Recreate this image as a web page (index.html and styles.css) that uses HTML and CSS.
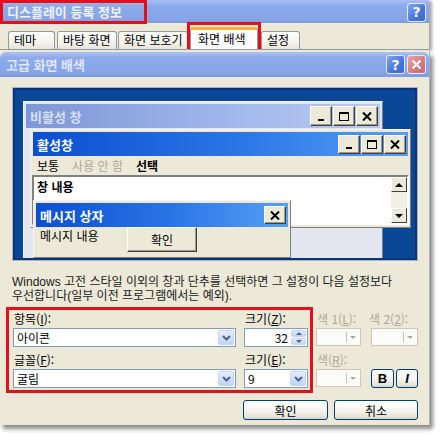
FILE: index.html
```html
<!DOCTYPE html>
<html lang="ko">
<head>
  <meta charset="utf-8">
  <link rel="stylesheet" href="styles.css">
</head>
<body>
<div class="screen">

  <div class="back">
    <div class="back-title">
      <span class="title-mark">디스플레이 등록 정보</span>
      <span class="xp-btn xp-help back-help">?</span>
    </div>
    <div class="tabs">
      <span class="tab t1">테마</span>
      <span class="tab t2">바탕 화면</span>
      <span class="tab t3">화면 보호기</span>
      <span class="tab-mark"><span class="tab tab-on">화면 배색</span></span>
      <span class="tab t5">설정</span>
    </div>
  </div>

  <div class="front">
    <div class="front-title">
      <span class="front-name">고급 화면 배색</span>
      <span class="xp-btn xp-help">?</span>
      <span class="xp-btn xp-close">
        <svg width="11" height="11" viewBox="0 0 11 11"><path d="M1.5 1.5L9.5 9.5M9.5 1.5L1.5 9.5" stroke="#fff" stroke-width="2"/></svg>
      </span>
    </div>

    <div class="preview">
      <div class="win win-inactive">
        <div class="win-title">
          <span class="win-name">비활성 창</span>
          <span class="ctl"><svg width="10" height="9"><rect x="2" y="7" width="6" height="2"/></svg></span>
          <span class="ctl"><svg width="10" height="9"><rect x="0.5" y="0.5" width="9" height="8" fill="none" stroke="#000"/><rect width="10" height="2"/></svg></span>
          <span class="ctl"><svg width="10" height="9"><path d="M1 0.5L9 8.5M9 0.5L1 8.5" stroke="#000" stroke-width="2"/></svg></span>
        </div>
      </div>

      <div class="win win-active">
        <div class="win-title">
          <span class="win-name">활성창</span>
          <span class="ctl"><svg width="10" height="9"><rect x="2" y="7" width="6" height="2"/></svg></span>
          <span class="ctl"><svg width="10" height="9"><rect x="0.5" y="0.5" width="9" height="8" fill="none" stroke="#000"/><rect width="10" height="2"/></svg></span>
          <span class="ctl"><svg width="10" height="9"><path d="M1 0.5L9 8.5M9 0.5L1 8.5" stroke="#000" stroke-width="2"/></svg></span>
        </div>
        <div class="menu">
          <span>보통</span>
          <span class="menu-off">사용 안 함</span>
          <span class="menu-sel">선택</span>
        </div>
        <div class="content">
          <span class="content-text">창 내용</span>
          <div class="scroll">
            <span class="sbtn"><span class="tri-up"></span></span>
            <span class="strack"></span>
            <span class="sbtn"><span class="tri-down"></span></span>
          </div>
        </div>
      </div>

      <div class="win win-msg">
        <div class="win-title">
          <span class="win-name">메시지 상자</span>
          <span class="ctl"><svg width="10" height="9"><path d="M1 0.5L9 8.5M9 0.5L1 8.5" stroke="#000" stroke-width="2"/></svg></span>
        </div>
        <div class="msg-body">
          <span class="msg-text">메시지 내용</span>
          <span class="classic-btn">확인</span>
        </div>
      </div>
    </div>

    <p class="note">Windows 고전 스타일 이외의 창과 단추를 선택하면 그 설정이 다음 설정보다<br>우선합니다(일부 이전 프로그램에서는 예외).</p>

    <div class="fields">
      <div class="redbox">
        <div class="col col-wide">
          <span class="label">항목(<u>I</u>):</span>
          <div class="combo"><span class="combo-text">아이콘</span><span class="drop"><svg width="9" height="6"><path d="M1 1L4.5 4.5L8 1" fill="none" stroke="#4d6185" stroke-width="2"/></svg></span></div>
          <span class="label label-2">글꼴(<u>F</u>):</span>
          <div class="combo"><span class="combo-text">굴림</span><span class="drop"><svg width="9" height="6"><path d="M1 1L4.5 4.5L8 1" fill="none" stroke="#4d6185" stroke-width="2"/></svg></span></div>
        </div>
        <div class="col col-size">
          <span class="label">크기(<u>Z</u>):</span>
          <div class="combo spin"><span class="spin-text">32</span><span class="spin-btns"><span class="sp"><span class="stri-up"></span></span><span class="sp"><span class="stri-down"></span></span></span></div>
          <span class="label label-2">크기(<u>E</u>):</span>
          <div class="combo"><span class="combo-text">9</span><span class="drop"><svg width="9" height="6"><path d="M1 1L4.5 4.5L8 1" fill="none" stroke="#4d6185" stroke-width="2"/></svg></span></div>
        </div>
      </div>

      <div class="extra">
        <span class="label off">색 1(<u>L</u>):</span>
        <span class="label off label-c2">색 2(<u>2</u>):</span>
        <span class="dis"><span class="dis-bar"></span><span class="dis-tri"></span></span>
        <span class="dis"><span class="dis-bar"></span><span class="dis-tri"></span></span>
        <span class="label off">색(<u>R</u>):</span>
        <span></span>
        <span class="dis"><span class="dis-bar"></span><span class="dis-tri"></span></span>
        <span class="style-btns"><span class="xp-button sb-b">B</span><span class="xp-button sb-i">I</span></span>
      </div>
    </div>

    <div class="buttons">
      <span class="xp-button ok">확인</span>
      <span class="xp-button cancel">취소</span>
    </div>
  </div>

</div>
</body>
</html>
```

FILE: styles.css
```css
* {
  box-sizing: border-box;
}
body {
  margin: 0;
  background: #fff;
  font-family: "Noto Sans CJK KR", "Noto Sans", sans-serif;
  font-size: 12px;
  color: #000;
}
.screen {
  width: 442px;
  height: 437px;
  overflow: hidden;
  background: #fff;
}

/* back dialog */
.back {
  width: 429px;
  height: 52px;
  background: #ece9d8;
  box-shadow: 4px 0 3px -1px rgba(0, 0, 0, .35);
}
.back-title {
  height: 24px;
  display: flex;
  align-items: center;
  padding-right: 3px;
  background: linear-gradient(180deg, #a9bff2 0%, #8ca9ea 25%, #87a4e8 80%, #7c99e0 100%);
}
.title-mark {
  width: 147px;
  height: 24px;
  border: 3px solid #e3101a;
  padding-left: 4px;
  color: #eef2fd;
  font-size: 13px;
  font-weight: bold;
  line-height: 17px;
  white-space: nowrap;
}
.back-help {
  margin-left: auto;
  width: 18px;
  height: 18px;
}
.tabs {
  height: 27px;
  display: flex;
  align-items: flex-end;
  padding-left: 8px;
  margin-top: -1px;
  border-bottom: 1px solid #919b9c;
  background: #ece9d8;
}
.tab {
  height: 18px;
  border: 1px solid #919b9c;
  border-bottom: none;
  border-radius: 3px 3px 0 0;
  background: linear-gradient(180deg, #fff, #f1f0ea 70%, #e4e2d9);
  line-height: 16px;
  padding-left: 5px;
  white-space: nowrap;
}
.t1 { width: 47px; margin-right: 2px; }
.t2 { width: 60px; margin-right: 1px; }
.t3 { width: 70px; }
.t5 { width: 39px; }
.tab-mark {
  width: 74px;
  height: 27px;
  margin-left: -1px;
  border: 3px solid #e3101a;
  border-bottom: none;
  display: flex;
  align-items: flex-end;
}
.tab-on {
  width: 68px;
  height: 22px;
  border-top: 3px solid #f6b23c;
  background: #fcfcfe;
  padding-left: 7px;
  line-height: 18px;
}

/* front dialog */
.front {
  width: 430px;
  height: 373px;
  background: #ece9d8;
  border-right: 1px solid #a7aec4;
  box-shadow: 3px 4px 4px rgba(0, 0, 0, .45);
}
.front-title {
  height: 25px;
  display: flex;
  align-items: center;
  gap: 2px;
  padding: 0 3px 0 6px;
  border-radius: 6px 6px 0 0;
  background: linear-gradient(180deg, #adc3f3 0%, #8eaaea 22%, #88a5e8 80%, #7d9ae1 100%);
}
.front-name {
  margin-right: auto;
  color: #dfe7fa;
  font-size: 13px;
  font-weight: bold;
}
.xp-btn {
  width: 19px;
  height: 19px;
  border: 1px solid #e4ebfb;
  border-radius: 3px;
  display: flex;
  align-items: center;
  justify-content: center;
  color: #fff;
  font: bold 14px "DejaVu Sans", sans-serif;
}
.xp-help {
  background: linear-gradient(135deg, #86a6ee, #4474de 60%, #3a68d6);
}
.xp-close {
  background: linear-gradient(135deg, #e7a4a6, #d27a7e 60%, #c96c70);
}

/* preview */
.preview {
  position: relative;
  overflow: hidden;
  margin: 11px 0 0 13px;
  width: 404px;
  height: 172px;
  border: 2px solid #08347c;
  background: #0b4797;
  box-shadow: 0 0 0 1px #a9b3c2;
}
.win {
  position: absolute;
  border: 1px solid #7e7e7e;
  border-top-color: #f4f4f4;
  border-left-color: #f4f4f4;
  padding: 2px;
  background: #ece9d8;
}
.win-inactive {
  left: 8px;
  top: 11px;
  width: 360px;
  height: 170px;
  background: #e3e6ee;
}
.win-active {
  left: 15px;
  top: 39px;
  width: 381px;
  height: 99px;
}
.win-msg {
  left: 18px;
  top: 110px;
  width: 258px;
  height: 58px;
}
.win-title {
  height: 24px;
  display: flex;
  align-items: center;
  gap: 1px;
  padding-right: 2px;
  background: linear-gradient(90deg, #0b4fd0, #2a76e6 55%, #56a0f4);
}
.win-inactive .win-title {
  background: linear-gradient(90deg, #7d97d7, #a3b8ec 60%, #b8c9f1);
}
.win-name {
  margin-right: auto;
  padding-left: 4px;
  color: #fff;
  font-size: 13px;
  font-weight: bold;
}
.win-inactive .win-name {
  color: #d9e0f1;
}
.ctl {
  width: 22px;
  height: 19px;
  display: flex;
  align-items: center;
  justify-content: center;
  background: #ece9d8;
  border: 1px solid;
  border-color: #fff #404040 #404040 #fff;
  box-shadow: inset -1px -1px #9a988e;
}
.win-inactive .ctl {
  height: 20px;
}
.menu {
  height: 19px;
  display: flex;
  align-items: center;
  gap: 13px;
  padding-left: 4px;
}
.menu-off {
  color: #aca899;
}
.menu-sel {
  font-weight: bold;
}
.content {
  position: relative;
  height: 50px;
  margin: 0 -1px;
  border: 2px solid;
  border-color: #808080 #fff #fff #808080;
  background: #fff;
  padding: 1px 3px;
}
.content-text {
  font-weight: bold;
  line-height: 14px;
}
.scroll {
  position: absolute;
  right: 0;
  top: 0;
  bottom: 0;
  width: 16px;
  display: flex;
  flex-direction: column;
  background: #f1efe6;
}
.strack {
  flex: 1;
}
.sbtn {
  height: 15px;
  display: flex;
  align-items: center;
  justify-content: center;
  background: #ece9d8;
  border: 1px solid;
  border-color: #fff #404040 #404040 #fff;
}
.tri-up {
  border: 4px solid transparent;
  border-top: none;
  border-bottom: 4px solid #000;
}
.tri-down {
  border: 4px solid transparent;
  border-bottom: none;
  border-top: 4px solid #000;
}
.win-msg .ctl {
  width: 22px;
  height: 18px;
}
.msg-body {
  display: grid;
  grid-template-columns: 91px 70px;
  height: 28px;
}
.msg-text {
  padding: 2px 0 0 4px;
  line-height: 14px;
}
.classic-btn {
  height: 25px;
  display: flex;
  align-items: center;
  justify-content: center;
  background: #ece9d8;
  border: 1px solid;
  border-color: #fff #404040 #404040 #fff;
  box-shadow: inset -1px -1px #9a988e;
}

/* note */
.note {
  margin: 16px 0 0 12px;
  font-family: "Liberation Sans", "Noto Sans CJK KR", sans-serif;
  line-height: 13.5px;
  white-space: nowrap;
  color: #1a1a1a;
}

/* fields */
.fields {
  display: flex;
  margin: 4px 0 0 6px;
}
.redbox {
  width: 307px;
  display: flex;
  gap: 8px;
  padding: 2px 2px 2px 4px;
  border: 3px solid #e3101a;
}
.col {
  display: flex;
  flex-direction: column;
}
.col-wide { width: 223px; }
.col-size { width: 64px; }
.label {
  height: 14px;
  line-height: 14px;
  margin-bottom: 2px;
  padding-left: 1px;
  white-space: nowrap;
}
.label-2 {
  margin-top: 6px;
}
.combo {
  height: 19px;
  display: flex;
  align-items: center;
  border: 1px solid #7f9db9;
  background: #fff;
  padding: 1px;
}
.combo-text {
  flex: 1;
  padding-left: 2px;
}
.drop {
  width: 16px;
  height: 15px;
  display: flex;
  align-items: center;
  justify-content: center;
  border: 1px solid #c3d3fd;
  border-radius: 2px;
  background: linear-gradient(180deg, #e6eefe, #c0d3fb);
}
.spin-text {
  flex: 1;
  text-align: right;
  padding-right: 3px;
}
.spin-btns {
  width: 15px;
  height: 15px;
  display: flex;
  flex-direction: column;
  gap: 1px;
}
.sp {
  flex: 1;
  display: flex;
  align-items: center;
  justify-content: center;
  border-radius: 2px;
  border: 1px solid #c3d3fd;
  background: linear-gradient(180deg, #e6eefe, #c0d3fb);
}
.stri-up {
  border: 3px solid transparent;
  border-top: none;
  border-bottom: 3px solid #4d6185;
}
.stri-down {
  border: 3px solid transparent;
  border-bottom: none;
  border-top: 3px solid #4d6185;
}
.extra {
  margin-left: 3px;
  padding-top: 5px;
  display: grid;
  grid-template-columns: 45px 47px;
  grid-template-rows: 16px 25px 16px 19px;
  column-gap: 10px;
  align-items: start;
}
.off {
  color: #aca899;
}
.label-c2 {
  margin-left: -3px;
}
.dis {
  height: 18px;
  display: flex;
  align-items: center;
  justify-content: flex-end;
  gap: 3px;
  padding-right: 4px;
  border: 1px solid #cbc8b8;
  background: #fbfbf8;
}
.dis-bar {
  width: 1px;
  height: 10px;
  background: #c4c1b2;
}
.dis-tri {
  border: 3px solid transparent;
  border-bottom: none;
  border-top: 3px solid #aca899;
}
.style-btns {
  display: flex;
  gap: 2px;
}
.xp-button {
  display: flex;
  align-items: center;
  justify-content: center;
  border: 1px solid #003c74;
  border-radius: 3px;
  background: linear-gradient(180deg, #fff, #f5f4ef 55%, #e3e0d4 90%, #d6d0c5);
}
.sb-b {
  width: 23px;
  height: 19px;
  font: bold 13px "Liberation Sans", sans-serif;
}
.sb-i {
  width: 22px;
  height: 19px;
  font: italic bold 13px "Liberation Sans", sans-serif;
}
.buttons {
  display: flex;
  justify-content: flex-end;
  gap: 6px;
  margin-top: 7px;
  padding-right: 11px;
}
.ok { width: 85px; height: 20px; }
.cancel { width: 84px; height: 20px; }
```
